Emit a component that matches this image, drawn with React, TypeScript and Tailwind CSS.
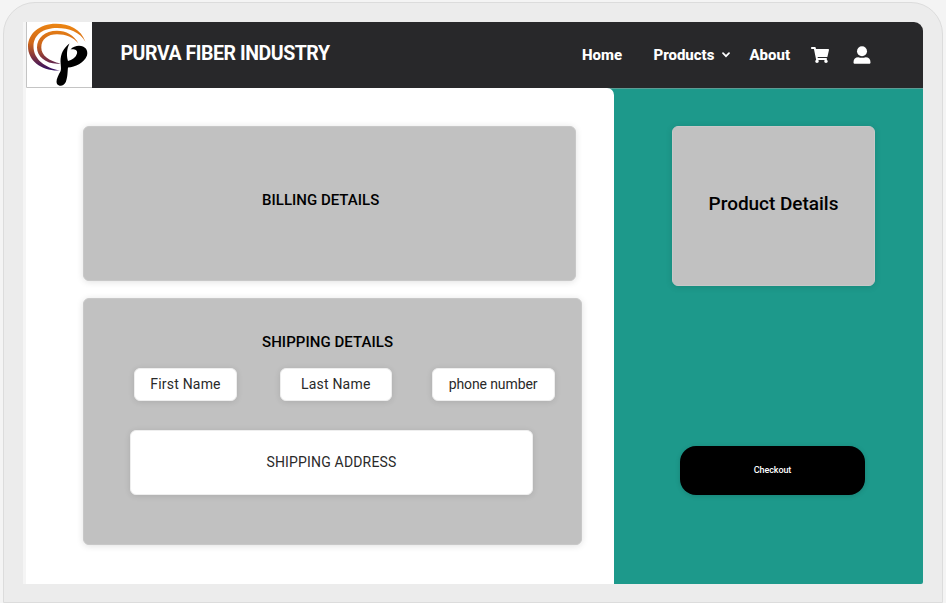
import React from "react";
import { FaShoppingCart } from "react-icons/fa";

function Logo() {
  return (
    <svg viewBox="0 0 66 66" className="block h-[66px] w-[66px] shrink-0 bg-white">
      <defs>
        <linearGradient id="ring" gradientUnits="userSpaceOnUse" x1="32" y1="2" x2="28" y2="49">
          <stop offset="0" stopColor="#ec8512" />
          <stop offset="0.45" stopColor="#cf6719" />
          <stop offset="0.75" stopColor="#7d3040" />
          <stop offset="1" stopColor="#2e1065" />
        </linearGradient>
      </defs>
      <path
        fill="url(#ring)"
        d="M59.500 20C55 7 43 1.800 30 1.800C13 1.800 2 12 2 24.500C2 39 16 49.500 34 48.500C19 46 7.500 37 7.500 24.500C7.500 12 18 6 31 6C43 6 54 10 59.500 20Z"
      />
      <path
        fill="url(#ring)"
        d="M52.500 21.500C48 13 40 8.800 31 8.800C19 8.800 11 16 11 25.500C11 35 21 43 34.500 41.500C23 39 15.300 33.500 15.300 25.500C15.300 17 22 12.300 31 12.300C40 12.300 47 15 52.500 21.500Z"
      />
      <path
        d="M43.500 21.500C37.500 26 34.500 32 34.500 39C34.800 46 36 48 33 52C31 56 29.800 59.500 31 62C33.500 65 38 64 39.800 60C41.800 55 41.500 49 42 45.500C49 45 58 41 61 33.500C62.500 28 59 24 53 23.800C50 23.800 46.500 25 44.500 27.500C47.500 26.800 52 27.500 51 31.500C49.500 36 46 38 42 39C40.500 34 40.500 27 43.500 21.500Z"
        fill="#000"
      />
      <path d="M0.500 0V65.500H66" fill="none" stroke="#c4c4c4" strokeWidth="1" />
    </svg>
  );
}

function UserIcon() {
  return (
    <svg viewBox="0 0 18 18" className="ml-6 h-[18px] w-[18px]" fill="white">
      <circle cx="9" cy="5.200" r="5" />
      <path d="M0.500 16.200C0.500 13 2.500 11.200 5.300 11.200C7.500 12 10.500 12 12.700 11.200C15.500 11.200 17.500 13 17.500 16.200C17.500 17.200 17 17.800 16 17.800H2C1 17.800 0.500 17.200 0.500 16.200Z" />
    </svg>
  );
}

function Header() {
  return (
    <header className="flex h-[66px] overflow-hidden rounded-tr-[9px] bg-[#28282a] font-bold text-white">
      <Logo />
      <div className="ml-[28.500px] mt-5 w-[461.500px] text-[19.500px] leading-6 tracking-[-0.45px]">
        PURVA FIBER INDUSTRY
      </div>
      <nav className="flex h-[66px] items-center text-[15px] font-extrabold leading-5 tracking-[-0.02px]">
        <span className="w-[71.500px]">Home</span>
        <span className="w-[68px]">Products</span>
        <svg viewBox="0 0 8 6" className="h-[6px] w-[8px]" fill="none" stroke="white" strokeWidth="1.7" strokeLinecap="round">
          <path d="M1 1.200 4 4.200 7 1.200" />
        </svg>
        <span className="ml-5 w-[61.500px]">About</span>
        <FaShoppingCart className="h-4 w-[18px]" />
        <UserIcon />
      </nav>
    </header>
  );
}

const panel = "rounded-[6px] border border-[#c8c8c8] bg-[#c1c1c1] shadow-[0_1px_7px_rgba(0,0,0,0.12)]";
const field =
  "flex items-center justify-center rounded-[6px] border border-[#eeeeee] bg-white text-[14px] text-[#2a2a2a] shadow-[0_1px_6px_rgba(0,0,0,0.11)]";

function Details() {
  return (
    <section className="h-[496px] w-[588px] rounded-tr-[7px] bg-white pl-[57px] pt-[38px]">
      <div className={`${panel} h-[155px] w-[493px] pl-[178px] pt-[63px]`}>
        <h2 className="text-[15px] font-medium leading-5 tracking-[0.02px] text-black">BILLING DETAILS</h2>
      </div>
      <div className={`${panel} mt-[17px] h-[247px] w-[499px] pt-[33px]`}>
        <h2 className="pl-[178px] text-[15px] font-medium leading-5 tracking-[0.06px] text-black">SHIPPING DETAILS</h2>
        <div className="ml-[50px] mt-4 flex">
          <div className={`${field} h-[33px] w-[103px] tracking-[0.2px]`}>First Name</div>
          <div className={`${field} ml-[43px] h-[33px] w-[111.500px] tracking-[0.2px]`}>Last Name</div>
          <div className={`${field} ml-[40px] h-[33px] w-[123px] tracking-[-0.1px]`}>phone number</div>
        </div>
        <div className={`${field} ml-[46px] mt-[29px] h-[65px] w-[403px] tracking-[0.17px]`}>
          SHIPPING ADDRESS
        </div>
      </div>
    </section>
  );
}

function Summary() {
  return (
    <aside className="w-[309px] pl-[57px] pt-[38px]">
      <div className={`${panel} ml-px h-[160px] w-[203px] pt-[65px] text-center`}>
        <h2 className="text-[19px] font-medium leading-6 tracking-[-0.03px] text-black">Product Details</h2>
      </div>
      <button className="ml-[9px] mt-[160px] flex h-[49px] w-[185px] items-center justify-center rounded-[16px] bg-black text-[9px] font-medium tracking-[-0.1px] text-white shadow-[0_1px_5px_rgba(0,0,0,0.15)]">
        Checkout
      </button>
    </aside>
  );
}

export default function App() {
  return (
    <div className="h-[603px] w-[946px] overflow-hidden bg-[#f4f4f4] pl-[3px] pt-[2px] font-['Roboto',sans-serif]">
      <div className="h-[601px] w-[940px] rounded-t-[32px] border border-[#dcdcdc] bg-[#ececec] pl-[19px] pt-[19px]">
        <div className="w-[900px] border-l-[3px] border-[#f5f5f5]">
          <Header />
          <main className="flex h-[496px] rounded-br-[2px] bg-[#1d998b] shadow-[inset_0_1px_0_#5b9c94]">
            <Details />
            <Summary />
          </main>
        </div>
      </div>
    </div>
  );
}
